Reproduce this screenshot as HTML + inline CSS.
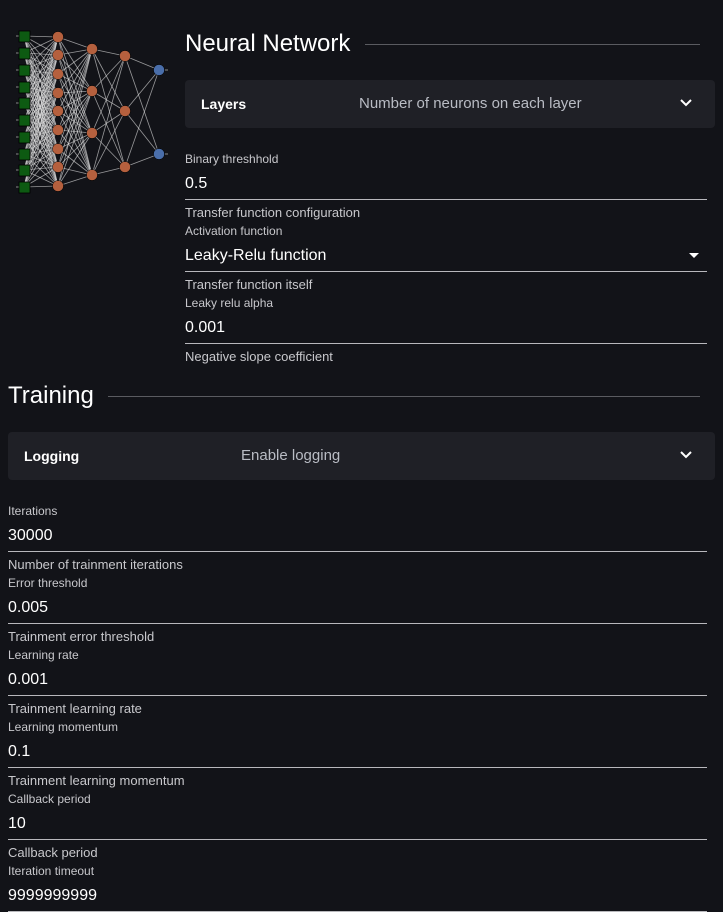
<!DOCTYPE html>
<html><head><meta charset="utf-8"><style>
body{margin:0;width:723px;height:895px;overflow:hidden;background:#121318;font-family:"Liberation Sans",sans-serif;color:#fff;position:relative}
.a{position:absolute;white-space:nowrap}
.t{font-size:24px;color:#fff}
.hr{position:absolute;height:1px;background:#5a5b60}
.pn{position:absolute;background:#1f2026;border-radius:4px;height:48px}
.pn .h{position:absolute;top:16px;font-size:14px;font-weight:bold;color:#fff}
.pn .s{position:absolute;top:15px;font-size:15px;color:#b9bcc4}
.lb{font-size:12px;color:#c8c8cc}
.hn{font-size:13px;color:#c8c8cc}
.v{font-size:16px;color:#fff}
.ul{position:absolute;height:1px;background:#b8b8bc}
</style></head><body>
<svg id="net" class="a" style="left:0;top:0" width="180" height="200"></svg>
<div class="a t" style="left:185px;top:30px">Neural Network</div>
<div class="hr" style="left:365px;top:44px;width:335px"></div>
<div class="pn" style="left:185px;top:80px;width:530px">
<div class="h" style="left:16px">Layers</div>
<div class="s" style="left:174px">Number of neurons on each layer</div>
<svg class="a" style="left:494px;top:18px" width="14" height="10"><path d="M2 2l5 5 5-5" stroke="#fff" stroke-width="2" fill="none"/></svg>
</div>
<div class="a lb" style="left:185px;top:152px">Binary threshhold</div>
<div class="a v" style="left:185px;top:175px">0.5</div>
<div class="ul" style="left:185px;top:199px;width:522px"></div>
<div class="a hn" style="left:185px;top:205px">Transfer function configuration</div>
<div class="a lb" style="left:185px;top:224px">Activation function</div>
<div class="a v" style="left:185px;top:247px">Leaky-Relu function</div>
<svg class="a" style="left:689px;top:253px" width="10" height="6"><path d="M0 0h10L5 5z" fill="#fff"/></svg>
<div class="ul" style="left:185px;top:271px;width:522px"></div>
<div class="a hn" style="left:185px;top:277px">Transfer function itself</div>
<div class="a lb" style="left:185px;top:296px">Leaky relu alpha</div>
<div class="a v" style="left:185px;top:319px">0.001</div>
<div class="ul" style="left:185px;top:343px;width:522px"></div>
<div class="a hn" style="left:185px;top:349px">Negative slope coefficient</div>
<div class="a t" style="left:8px;top:382px">Training</div>
<div class="hr" style="left:108px;top:396px;width:592px"></div>
<div class="pn" style="left:8px;top:432px;width:707px">
<div class="h" style="left:16px">Logging</div>
<div class="s" style="left:233px">Enable logging</div>
<svg class="a" style="left:671px;top:18px" width="14" height="10"><path d="M2 2l5 5 5-5" stroke="#fff" stroke-width="2" fill="none"/></svg>
</div>
<div id="f"></div>
<script>
var f=[["Iterations","30000","Number of trainment iterations"],["Error threshold","0.005","Trainment error threshold"],["Learning rate","0.001","Trainment learning rate"],["Learning momentum","0.1","Trainment learning momentum"],["Callback period","10","Callback period"],["Iteration timeout","9999999999",""]];
var h="";f.forEach(function(r,i){var y=504+i*72;
h+='<div class="a lb" style="left:8px;top:'+y+'px">'+r[0]+'</div><div class="a v" style="left:8px;top:'+(y+23)+'px">'+r[1]+'</div><div class="ul" style="left:8px;top:'+(y+47)+'px;width:699px"></div><div class="a hn" style="left:8px;top:'+(y+53)+'px">'+r[2]+'</div>';});
document.getElementById("f").innerHTML=h;
var L=[[24,[36,53,70,87,103,120,137,154,170,187]],[58,[37,55,74,93,111,130,149,167,186]],[92,[49,91,133,175]],[125,[56,111,167]],[159,[70,154]]];
var s="";
for(var k=0;k<4;k++){L[k][1].forEach(function(a){L[k+1][1].forEach(function(b){s+='<line x1="'+L[k][0]+'" y1="'+a+'" x2="'+L[k+1][0]+'" y2="'+b+'" stroke="#e0e0e0" stroke-opacity="0.65" stroke-width="0.8"/>';});});}
L[0][1].forEach(function(y){s+='<line x1="16" y1="'+y+'" x2="20" y2="'+y+'" stroke="#888"/><rect x="19" y="'+(y-5)+'" width="11" height="11" fill="#0d5a12" stroke="#000" stroke-width="0.8"/>';});
for(var k=1;k<5;k++){L[k][1].forEach(function(y){s+='<circle cx="'+L[k][0]+'" cy="'+y+'" r="5.5" fill="'+(k==4?'#4a6eaa':'#b5603e')+'" stroke="#000" stroke-width="0.5"/>';});}
L[4][1].forEach(function(y){s+='<line x1="165" y1="'+y+'" x2="168" y2="'+y+'" stroke="#888"/>';});
document.getElementById("net").innerHTML=s;
</script>
</body></html>
